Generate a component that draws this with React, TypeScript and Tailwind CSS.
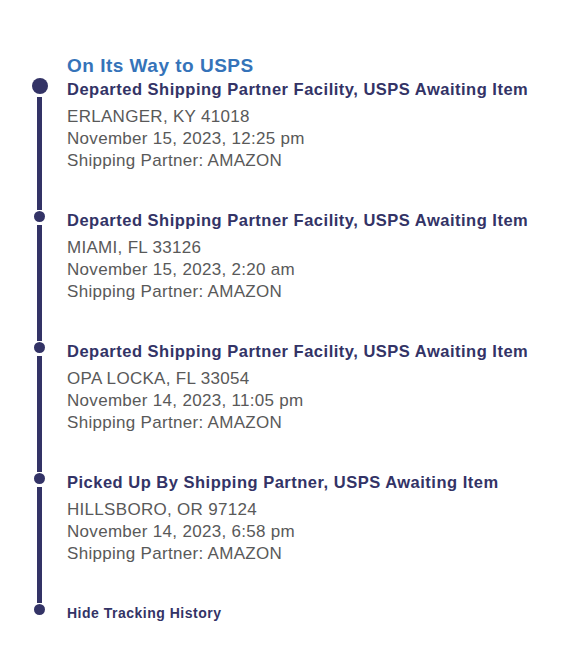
import React from 'react';

interface TrackingEvent {
  status: string;
  location: string;
  time: string;
  partner: string;
}

const events: TrackingEvent[] = [
  {
    status: 'Departed Shipping Partner Facility, USPS Awaiting Item',
    location: 'ERLANGER, KY 41018',
    time: 'November 15, 2023, 12:25 pm',
    partner: 'Shipping Partner: AMAZON',
  },
  {
    status: 'Departed Shipping Partner Facility, USPS Awaiting Item',
    location: 'MIAMI, FL 33126',
    time: 'November 15, 2023, 2:20 am',
    partner: 'Shipping Partner: AMAZON',
  },
  {
    status: 'Departed Shipping Partner Facility, USPS Awaiting Item',
    location: 'OPA LOCKA, FL 33054',
    time: 'November 14, 2023, 11:05 pm',
    partner: 'Shipping Partner: AMAZON',
  },
  {
    status: 'Picked Up By Shipping Partner, USPS Awaiting Item',
    location: 'HILLSBORO, OR 97124',
    time: 'November 14, 2023, 6:58 pm',
    partner: 'Shipping Partner: AMAZON',
  },
];

const App: React.FC = () => {
  return (
    <div className="min-h-screen bg-white pt-[54px] pl-[30px] font-['Liberation_Sans',Arial,sans-serif]">
      <h2 className="ml-[37px] text-[19px] leading-[24px] font-bold tracking-[0.5px] text-[#3573b9]">
        On Its Way to USPS
      </h2>

      {events.map((ev, i) => (
        <div key={i} className="flex">
          {/* timeline rail */}
          <div className="w-[19px] flex flex-col items-center">
            {i === 0 ? (
              <div className="w-[16px] h-[16px] rounded-full bg-[#333366] shrink-0" />
            ) : (
              <>
                <div className="w-[5px] h-[1px] bg-[#333366] shrink-0" />
                <div className="mt-[1px] w-[11px] h-[11px] rounded-full bg-[#333366] shrink-0" />
              </>
            )}
            <div className="mt-[3px] w-[5px] flex-1 bg-[#333366]" />
          </div>

          <div className="ml-[18px] pb-[38px]">
            <p className="text-[16.5px] leading-[22px] font-bold tracking-[0.5px] text-[#333366]">{ev.status}</p>
            <div className="mt-[6px] mb-[-1px] text-[17px] leading-[22px] tracking-[0.3px] text-[#595959]">
              <p>{ev.location}</p>
              <p>{ev.time}</p>
              <p>{ev.partner}</p>
            </div>
          </div>
        </div>
      ))}

      <div className="flex items-start">
        <div className="w-[19px] flex flex-col items-center">
          <div className="w-[5px] h-[1px] bg-[#333366]" />
          <div className="mt-[1px] w-[11px] h-[11px] rounded-full bg-[#333366]" />
        </div>
        <button className="ml-[18px] pt-[1px] text-[14px] leading-[20px] font-bold tracking-[0.5px] text-[#333366]">
          Hide Tracking History
        </button>
      </div>
    </div>
  );
};

export default App;
